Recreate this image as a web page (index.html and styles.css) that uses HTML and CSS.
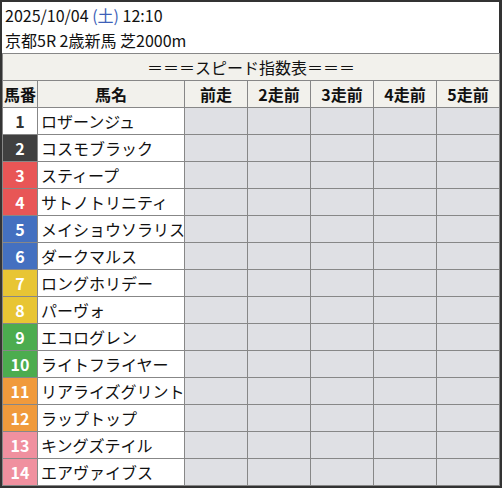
FILE: index.html
```html
<!DOCTYPE html>
<html lang="ja">
<head>
<meta charset="utf-8">
<link rel="stylesheet" href="styles.css">
</head>
<body>
<div class="frame">
  <div class="info">
    <div class="line">2025/10/04 <span class="sat">(土)</span> 12:10</div>
    <div class="line">京都5R 2歳新馬 芝2000m</div>
  </div>
  <table class="sheet">
    <colgroup>
      <col class="c-no"><col class="c-name"><col class="c-d"><col class="c-d"><col class="c-d"><col class="c-d"><col class="c-d">
    </colgroup>
    <tr class="title-row"><td colspan="7">＝＝＝スピード指数表＝＝＝</td></tr>
    <tr class="head-row"><th>馬番</th><th>馬名</th><th>前走</th><th>2走前</th><th>3走前</th><th>4走前</th><th>5走前</th></tr>
    <tr><td class="no w1">1</td><td class="name">ロザーンジュ</td><td class="d"></td><td class="d"></td><td class="d"></td><td class="d"></td><td class="d"></td></tr>
    <tr><td class="no w2">2</td><td class="name">コスモブラック</td><td class="d"></td><td class="d"></td><td class="d"></td><td class="d"></td><td class="d"></td></tr>
    <tr><td class="no w3">3</td><td class="name">スティープ</td><td class="d"></td><td class="d"></td><td class="d"></td><td class="d"></td><td class="d"></td></tr>
    <tr><td class="no w3">4</td><td class="name">サトノトリニティ</td><td class="d"></td><td class="d"></td><td class="d"></td><td class="d"></td><td class="d"></td></tr>
    <tr><td class="no w4">5</td><td class="name">メイショウソラリス</td><td class="d"></td><td class="d"></td><td class="d"></td><td class="d"></td><td class="d"></td></tr>
    <tr><td class="no w4">6</td><td class="name">ダークマルス</td><td class="d"></td><td class="d"></td><td class="d"></td><td class="d"></td><td class="d"></td></tr>
    <tr><td class="no w5">7</td><td class="name">ロングホリデー</td><td class="d"></td><td class="d"></td><td class="d"></td><td class="d"></td><td class="d"></td></tr>
    <tr><td class="no w5">8</td><td class="name">パーヴォ</td><td class="d"></td><td class="d"></td><td class="d"></td><td class="d"></td><td class="d"></td></tr>
    <tr><td class="no w6">9</td><td class="name">エコログレン</td><td class="d"></td><td class="d"></td><td class="d"></td><td class="d"></td><td class="d"></td></tr>
    <tr><td class="no w6">10</td><td class="name">ライトフライヤー</td><td class="d"></td><td class="d"></td><td class="d"></td><td class="d"></td><td class="d"></td></tr>
    <tr><td class="no w7">11</td><td class="name">リアライズグリント</td><td class="d"></td><td class="d"></td><td class="d"></td><td class="d"></td><td class="d"></td></tr>
    <tr><td class="no w7">12</td><td class="name">ラップトップ</td><td class="d"></td><td class="d"></td><td class="d"></td><td class="d"></td><td class="d"></td></tr>
    <tr><td class="no w8">13</td><td class="name">キングズテイル</td><td class="d"></td><td class="d"></td><td class="d"></td><td class="d"></td><td class="d"></td></tr>
    <tr><td class="no w8">14</td><td class="name">エアヴァイブス</td><td class="d"></td><td class="d"></td><td class="d"></td><td class="d"></td><td class="d"></td></tr>
  </table>
</div>
</body>
</html>
```
FILE: styles.css
```css
html, body {
  margin: 0;
  padding: 0;
  background: #ffffff;
}
body {
  font-family: "Noto Sans CJK JP", "Noto Sans", sans-serif;
  color: #111;
}
.frame {
  width: 497px;
  border-style: solid;
  border-color: #333333;
  border-width: 2px 3px 2px 2px;
  background: #fff;
}
.info {
  height: 51px;
  padding-left: 3px;
  box-sizing: border-box;
  padding-top: 1px;
}
.info .line {
  font-size: 16px;
  line-height: 25px;
  height: 25px;
  white-space: nowrap;
}
.sat {
  color: #3d5fb8;
}
.sheet {
  width: 497px;
  border-collapse: collapse;
  table-layout: fixed;
}
.c-no { width: 35px; }
.c-name { width: 147px; }
.c-d { width: 63px; }
.sheet td, .sheet th {
  border: 1px solid #878787;
  height: 26px;
  padding: 0;
  box-sizing: border-box;
  font-size: 16px;
  line-height: 20px;
  white-space: nowrap;
  overflow: hidden;
}
.sheet tr { height: 27px; }
.title-row td {
  background: #f2f1ec;
  text-align: center;
  font-weight: normal;
}
.head-row th {
  background: #f2f1ec;
  font-weight: bold;
  text-align: center;
}
.sheet td.no {
  text-align: center;
  font-weight: bold;
  color: #fff;
}
.sheet td.name {
  text-align: left;
  padding-left: 3px;
  background: #fff;
}
.sheet td.d {
  background: #dfe0e4;
}
.w1 { background: #ffffff; color: #333 !important; }
.w2 { background: #404040; }
.w3 { background: #e85656; }
.w4 { background: #4470c0; }
.w5 { background: #e8c534; }
.w6 { background: #4cac4f; }
.w7 { background: #f09a3c; }
.w8 { background: #f0909f; }
```
